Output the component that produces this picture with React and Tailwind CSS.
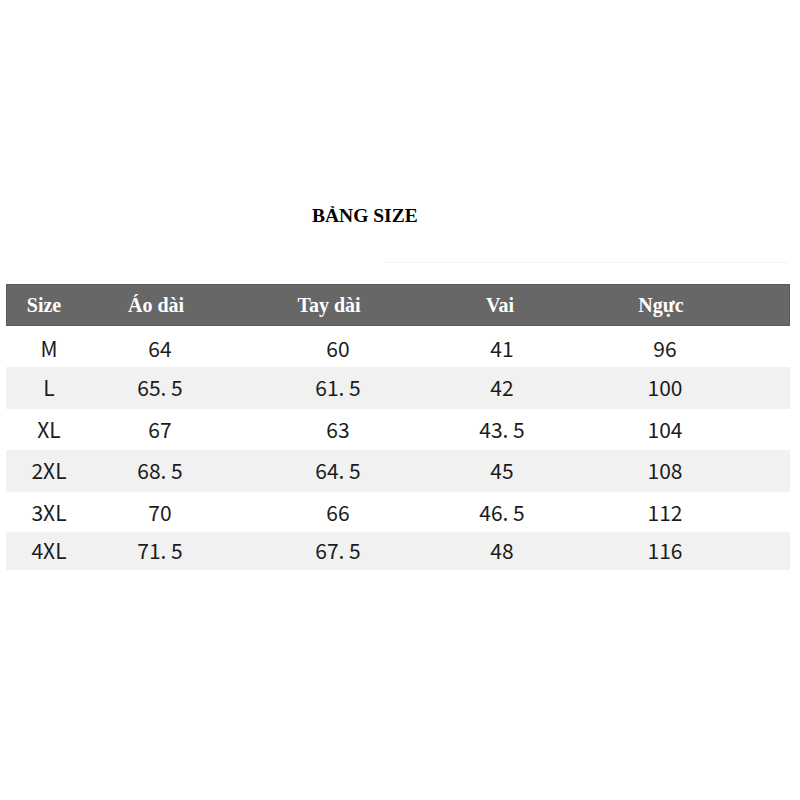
import React from "react";

const rows = [
  { size: "M", ao: "64", tay: "60", vai: "41", nguc: "96", h: "h-[41px] pt-[4px]", alt: false },
  { size: "L", ao: "65. 5", tay: "61. 5", vai: "42", nguc: "100", h: "h-[42px]", alt: true },
  { size: "XL", ao: "67", tay: "63", vai: "43. 5", nguc: "104", h: "h-[41px] pt-[1px]", alt: false },
  { size: "2XL", ao: "68. 5", tay: "64. 5", vai: "45", nguc: "108", h: "h-[42px]", alt: true },
  { size: "3XL", ao: "70", tay: "66", vai: "46. 5", nguc: "112", h: "h-[40px] pt-[2px]", alt: false },
  { size: "4XL", ao: "71. 5", tay: "67. 5", vai: "48", nguc: "116", h: "h-[38px]", alt: true },
];

const cols = "grid grid-cols-[86px_136px_220px_108px_218px_1fr] items-center";

export default function App() {
  return (
    <div className="w-[800px] h-[800px] bg-white flex flex-col">
      {/* Title */}
      <div className="pt-[205px] pl-[312px] h-[262px]">
        <h1 className="font-['Liberation_Serif',serif] font-bold text-[19.5px] leading-[22px] text-black">
          BẢNG SIZE
        </h1>
      </div>
      <div className="ml-[385px] mr-[12px] h-px bg-[#f3f3f3]" />

      {/* Table */}
      <div className="mt-[21px] ml-[6px] w-[784px]">
        <div className={`${cols} h-[42px] bg-[#676767] border border-[#5a5a5a] font-['Liberation_Serif',serif] font-bold text-[20px] leading-[24px] text-white`}>
          <div className="text-center pr-[12px]">Size</div>
          <div className="text-center pr-[10px]">Áo dài</div>
          <div className="text-center pr-[20px]">Tay dài</div>
          <div className="text-center pr-[6px]">Vai</div>
          <div className="text-center pr-[10px]">Ngực</div>
          <div />
        </div>
        {rows.map((r) => (
          <div
            key={r.size}
            className={`${cols} ${r.h} ${r.alt ? "bg-[#f1f1f1]" : "bg-white"} font-['Noto_Sans_CJK_SC','Noto_Sans',sans-serif] text-[21px] text-[#1c1c1c]`}
          >
            <div className="text-center">{r.size}</div>
            <div className="text-center">{r.ao}</div>
            <div className="text-center">{r.tay}</div>
            <div className="text-center">{r.vai}</div>
            <div className="text-center">{r.nguc}</div>
            <div />
          </div>
        ))}
      </div>
    </div>
  );
}
